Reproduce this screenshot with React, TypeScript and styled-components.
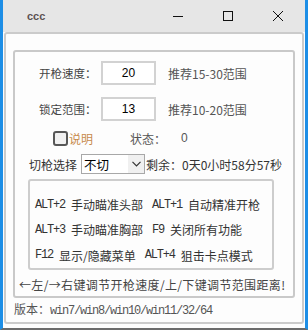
import styled, { createGlobalStyle } from "styled-components"

const GlobalStyle = createGlobalStyle`
  html, body {
    margin: 0;
    padding: 0;
    background: #ffffff;
  }
  * {
    box-sizing: border-box;
  }
`

const CJK = `"Noto Sans CJK SC", "Noto Sans", sans-serif`
const MONO = `"Liberation Mono", "Noto Sans CJK SC", monospace`

const shortcuts = [
  [
    ["ALT+2", "手动瞄准头部"],
    ["ALT+1", "自动精准开枪"],
  ],
  [
    ["ALT+3", "手动瞄准胸部"],
    ["F9", "关闭所有功能"],
  ],
  [
    ["F12", "显示/隐藏菜单"],
    ["ALT+4", "狙击卡点模式"],
  ],
]

export default function App() {
  return (
    <>
      <GlobalStyle />
      <Window>
        <TitleBar>
          <Title>ccc</Title>
          <Controls>
            <CtrlButton>
              <svg width="10" height="10" viewBox="0 0 10 10">
                <line x1="0" y1="5.5" x2="10" y2="5.5" stroke="#111" strokeWidth="1" />
              </svg>
            </CtrlButton>
            <CtrlButton>
              <svg width="10" height="10" viewBox="0 0 10 10">
                <rect x="0.5" y="0.5" width="9" height="9" fill="none" stroke="#111" strokeWidth="1" />
              </svg>
            </CtrlButton>
            <CtrlButton>
              <svg width="10" height="10" viewBox="0 0 10 10">
                <path d="M0 0 L10 10 M10 0 L0 10" stroke="#111" strokeWidth="1" />
              </svg>
            </CtrlButton>
          </Controls>
        </TitleBar>
        <Client>
          <Frame>
            <Group>
              <FieldRow>
                <FieldLabel>开枪速度：</FieldLabel>
                <ValueBox>20</ValueBox>
                <Hint>推荐15-30范围</Hint>
              </FieldRow>
              <FieldRow $gap={12}>
                <FieldLabel>锁定范围：</FieldLabel>
                <ValueBox>13</ValueBox>
                <Hint>推荐10-20范围</Hint>
              </FieldRow>
              <CheckRow>
                <CheckBox />
                <CheckText>说明</CheckText>
                <StatusLabel>状态：</StatusLabel>
                <StatusValue>0</StatusValue>
              </CheckRow>
              <SelectRow>
                <SelectLabel>切枪选择</SelectLabel>
                <SelectBox>
                  <SelectValue>不切</SelectValue>
                  <SelectArrow>
                    <svg width="9" height="6" viewBox="0 0 9 6">
                      <path d="M0.5 0.8 L4.5 4.8 L8.5 0.8" fill="none" stroke="#333" strokeWidth="1.2" />
                    </svg>
                  </SelectArrow>
                </SelectBox>
                <Remain>剩余：0天0小时58分57秒</Remain>
              </SelectRow>
              <ShortcutBox>
                {shortcuts.map((line, i) => (
                  <ShortcutLine key={i}>
                    {line.map(([key, text]) => (
                      <Shortcut key={key}>
                        <Key>{key}</Key>
                        <span>{text}</span>
                      </Shortcut>
                    ))}
                  </ShortcutLine>
                ))}
              </ShortcutBox>
              <Tip>←左/→右键调节开枪速度/上/下键调节范围距离!</Tip>
            </Group>
            <Version>
              版本：<Mono>win7/win8/win10/win11/32/64</Mono>
            </Version>
          </Frame>
        </Client>
      </Window>
    </>
  )
}

const Window = styled.div`
  width: 308px;
  height: 330px;
  display: flex;
  flex-direction: column;
  border-left: 3px solid #1d8ee6;
  border-right: 3px solid #1d8ee6;
  border-bottom: 2px solid #6b6b6b;
  background: #fdfdfd;
  overflow: hidden;
`

const TitleBar = styled.div`
  height: 32px;
  flex: none;
  display: flex;
  align-items: center;
  background: #e6e6e6;
`

const Title = styled.div`
  padding-left: 24px;
  flex: 1;
  font-family: "Liberation Sans", Arial, sans-serif;
  font-size: 11px;
  font-weight: bold;
  color: #5c5252;
`

const Controls = styled.div`
  display: flex;
  height: 100%;
  margin-right: 2px;
`

const CtrlButton = styled.div`
  width: 50px;
  height: 100%;
  display: flex;
  align-items: center;
  justify-content: center;
`

const Client = styled.div`
  flex: 1;
  padding: 0 1px 4px;
  display: flex;
`

const Frame = styled.div`
  flex: 1;
  border: 2px solid #cbcbcb;
  border-radius: 3px;
  padding: 16px 7px 0 7px;
  display: flex;
  flex-direction: column;
`

const Group = styled.div`
  border: 2px solid #c9c9c9;
  border-radius: 3px;
  padding: 9px 0 3px;
  display: flex;
  flex-direction: column;
  font-family: ${CJK};
  font-size: 12px;
  color: #444;
`

const FieldRow = styled.div<{ $gap?: number }>`
  display: flex;
  align-items: center;
  height: 24px;
  padding-left: 24px;
  margin-top: ${(p) => p.$gap ?? 0}px;
`

const FieldLabel = styled.span`
  width: 62px;
  white-space: nowrap;
  font-size: 11.5px;
  color: #444;
`

const ValueBox = styled.div`
  width: 55px;
  height: 24px;
  border: 2px solid #d2d2d2;
  background: #fff;
  display: flex;
  align-items: center;
  justify-content: center;
  font-family: "Liberation Sans", Arial, sans-serif;
  font-size: 12px;
  color: #000;
`

const Hint = styled.span`
  margin-left: 12px;
  color: #555;
`

const CheckRow = styled.div`
  display: flex;
  align-items: center;
  height: 16px;
  margin-top: 9px;
  padding-left: 38px;
`

const CheckBox = styled.div`
  width: 15px;
  height: 15px;
  border: 2px solid #575757;
  border-radius: 3px;
  background: #f1f1f1;
`

const CheckText = styled.span`
  margin-left: 1px;
  color: #c78a4c;
`

const StatusLabel = styled.span`
  margin-left: 37px;
  color: #555;
`

const StatusValue = styled.span`
  margin-left: 15px;
  font-family: "Liberation Sans", Arial, sans-serif;
  color: #555;
`

const SelectRow = styled.div`
  display: flex;
  align-items: center;
  height: 20px;
  margin-top: 8px;
  padding-left: 14px;
  color: #333;
`

const SelectLabel = styled.span`
  width: 52px;
`

const SelectBox = styled.div`
  width: 64px;
  height: 20px;
  border: 1px solid #a8a8a8;
  background: #fff;
  display: flex;
  align-items: stretch;
`

const SelectValue = styled.span`
  flex: 1;
  padding-left: 2px;
  display: flex;
  align-items: center;
  font-size: 12.5px;
  color: #000;
`

const SelectArrow = styled.span`
  width: 16px;
  background: #f0f0f0;
  display: flex;
  align-items: center;
  justify-content: center;
`

const Remain = styled.span`
  margin-left: 1px;
  white-space: nowrap;
`

const ShortcutBox = styled.div`
  margin: 5px 0 0 13px;
  width: 246px;
  height: 91px;
  border: 2px solid #cdcdcd;
  border-radius: 3px;
  padding: 11px 0 0 5px;
  display: flex;
  flex-direction: column;
`

const ShortcutLine = styled.div`
  height: 27px;
  display: flex;
  align-items: center;
  gap: 9px;
  white-space: nowrap;
`

const Shortcut = styled.span`
  display: flex;
  align-items: center;
  gap: 6px;
  color: #333;
`

const Key = styled.span`
  font-family: ${MONO};
  font-size: 12px;
  letter-spacing: -1.2px;
  color: #333;
`

const Tip = styled.div`
  margin-top: 7px;
  padding-left: 4px;
  height: 16px;
  line-height: 16px;
  white-space: nowrap;
  font-size: 12px;
  letter-spacing: 0.35px;
  color: #444;
`

const Version = styled.div`
  margin-top: 3px;
  padding-left: 1px;
  height: 16px;
  line-height: 16px;
  font-family: ${CJK};
  font-size: 12px;
  color: #555;
`

const Mono = styled.span`
  font-family: ${MONO};
  font-size: 12px;
  letter-spacing: -1.2px;
`
